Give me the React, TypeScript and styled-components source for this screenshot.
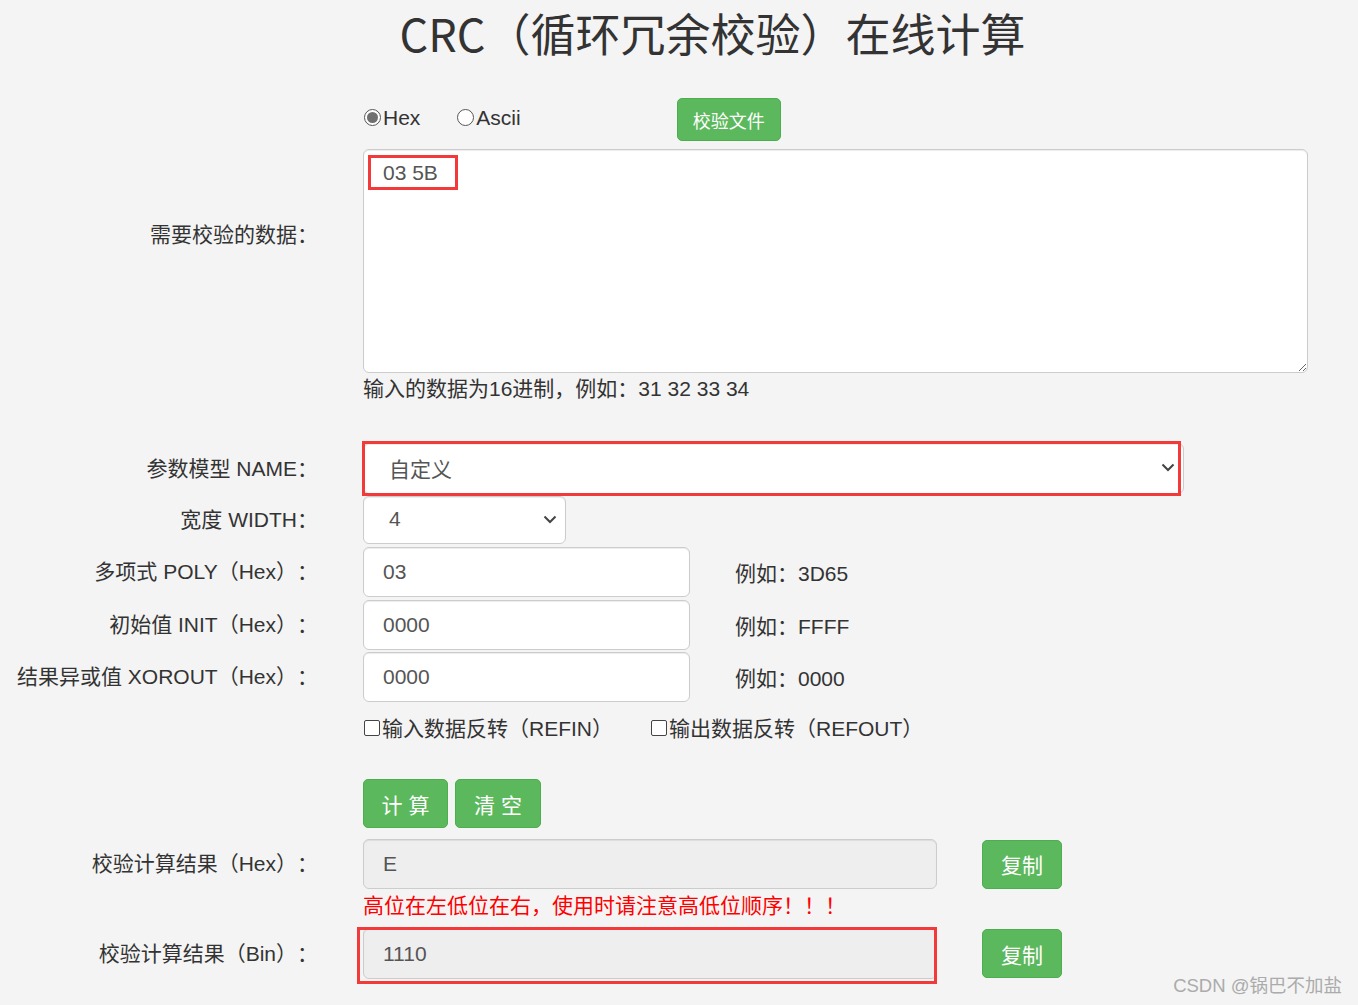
import React from "react";
import styled, { createGlobalStyle } from "styled-components";

const Global = createGlobalStyle`
  html, body { margin: 0; padding: 0; background: #f4f4f4; }
  body {
    font-family: "Liberation Sans", "Noto Sans CJK SC", sans-serif;
    color: #333;
    font-size: 21px;
  }
  * { box-sizing: border-box; }
`;

const Page = styled.div`
  position: relative;
  width: 1358px;
  height: 1005px;
`;

const Title = styled.h1`
  margin: 0;
  height: 66px;
  line-height: 66px;
  padding-left: 67px;
  text-align: center;
  font-family: "Noto Sans CJK SC", sans-serif;
  font-weight: 400;
  font-size: 45px;
  color: #333;
`;

const Row = styled.div<{ $mt: number; $top?: boolean }>`
  display: flex;
  align-items: ${(p) => (p.$top ? "flex-start" : "center")};
  margin-top: ${(p) => p.$mt}px;
`;

const Label = styled.div<{ $offset?: number }>`
  width: 318px;
  flex-shrink: 0;
  margin-right: 45px;
  text-align: right;
  white-space: nowrap;
  line-height: 22px;
  text-spacing-trim: space-all;
  margin-top: ${(p) => p.$offset ?? 0}px;
`;

const Field = styled.div`
  display: flex;
  align-items: center;
`;

const Choice = styled.label<{ $gap?: number; $lift?: number }>`
  display: inline-flex;
  align-items: center;
  line-height: 22px;
  margin-right: ${(p) => p.$gap ?? 0}px;
  margin-bottom: ${(p) => p.$lift ?? 0}px;
  white-space: nowrap;
`;

const RadioDot = styled.span<{ $on?: boolean }>`
  width: 17px;
  height: 17px;
  border-radius: 50%;
  border: 1px solid #555;
  background: #fff;
  margin: 0 2px 0 1px;
  display: inline-flex;
  align-items: center;
  justify-content: center;
  &::after {
    content: "";
    width: 11px;
    height: 11px;
    border-radius: 50%;
    background: ${(p) => (p.$on ? "#707070" : "transparent")};
  }
`;

const CheckBox = styled.span`
  width: 16px;
  height: 16px;
  border: 1px solid #444;
  border-radius: 2px;
  background: #fff;
  margin: 0 2px 0 1px;
  transform: translateY(-1px);
`;

const GreenButton = styled.button<{ $w: number; $h: number; $fs: number }>`
  width: ${(p) => p.$w}px;
  height: ${(p) => p.$h}px;
  font-family: "Liberation Sans", "Noto Sans CJK SC", sans-serif;
  font-size: ${(p) => p.$fs}px;
  color: #fff;
  background: #5cb85c;
  border: 1px solid #4cae4c;
  border-radius: 5px;
  padding: 0;
  cursor: pointer;
  white-space: pre;
`;

const FileButton = styled(GreenButton)`
  margin-left: 156px;
`;

const BoxWrap = styled.div`
  position: relative;
`;

const TextArea = styled.textarea`
  display: block;
  width: 945px;
  height: 224px;
  padding: 12px 19px;
  font-family: "Liberation Sans", "Noto Sans CJK SC", sans-serif;
  font-size: 21px;
  line-height: 22px;
  color: #555;
  background: #fff;
  border: 1px solid #ccc;
  border-radius: 6px;
  box-shadow: inset 0 1px 1px rgba(0, 0, 0, 0.075);
  outline: none;
`;

const Annot = styled.div`
  position: absolute;
  border: 3px solid #f33a3a;
  pointer-events: none;
`;

const Help = styled.div<{ $red?: boolean }>`
  margin-left: 363px;
  line-height: 22px;
  color: ${(p) => (p.$red ? "#ff0000" : "#333")};
`;

const SelectBox = styled.div<{ $w: number; $h: number }>`
  width: ${(p) => p.$w}px;
  height: ${(p) => p.$h}px;
  display: flex;
  align-items: center;
  justify-content: space-between;
  padding: 0 8px 2px 25px;
  background: #fff;
  border: 1px solid #ccc;
  border-radius: 6px;
  box-shadow: inset 0 1px 1px rgba(0, 0, 0, 0.075);
  color: #555;
`;

const Input = styled.div<{ $w: number; $h: number; $ro?: boolean }>`
  width: ${(p) => p.$w}px;
  height: ${(p) => p.$h}px;
  display: flex;
  align-items: center;
  padding: 0 19px;
  background: ${(p) => (p.$ro ? "#eeeeee" : "#fff")};
  border: 1px solid #ccc;
  border-radius: 6px;
  box-shadow: inset 0 1px 1px rgba(0, 0, 0, 0.075);
  color: #555;
`;

const Example = styled.span`
  margin-left: 45px;
  color: #333;
`;

const CopyButton = styled(GreenButton)`
  margin-left: 45px;
`;

const ButtonGroup = styled.div`
  display: flex;
  gap: 7px;
`;

const Watermark = styled.div`
  position: absolute;
  right: 16px;
  bottom: 8px;
  font-size: 18.5px;
  color: #ababab;
  white-space: nowrap;
`;

const Chevron = () => (
  <svg width="14" height="9" viewBox="0 0 14 9">
    <path d="M1.5 1.5 L7 7 L12.5 1.5" fill="none" stroke="#444" strokeWidth="2" />
  </svg>
);

export default function App() {
  return (
    <Page>
      <Global />
      <Title>CRC（循环冗余校验）在线计算</Title>

      <Row $mt={32}>
        <Label />
        <Field>
          <Choice $gap={36} $lift={4}>
            <RadioDot $on />
            Hex
          </Choice>
          <Choice $lift={4}>
            <RadioDot />
            Ascii
          </Choice>
          <FileButton $w={104} $h={43} $fs={18}>校验文件</FileButton>
        </Field>
      </Row>

      <Row $mt={8} $top>
        <Label $offset={75}>需要校验的数据：</Label>
        <BoxWrap>
          <TextArea defaultValue="03 5B" />
          <Annot style={{ left: 5, top: 6, width: 90, height: 35 }} />
        </BoxWrap>
      </Row>
      <Help style={{ marginTop: 5 }}>输入的数据为16进制，例如：31 32 33 34</Help>

      <Row $mt={43}>
        <Label>参数模型 NAME：</Label>
        <BoxWrap>
          <SelectBox $w={821} $h={51}>
            <span>自定义</span>
            <Chevron />
          </SelectBox>
          <Annot style={{ left: -1, top: -2, width: 819, height: 55 }} />
        </BoxWrap>
      </Row>

      <Row $mt={2}>
        <Label>宽度 WIDTH：</Label>
        <SelectBox $w={203} $h={48}>
          <span>4</span>
          <Chevron />
        </SelectBox>
      </Row>

      <Row $mt={3}>
        <Label>多项式 POLY（Hex）：</Label>
        <Field>
          <Input $w={327} $h={50}>03</Input>
          <Example>例如：3D65</Example>
        </Field>
      </Row>
      <Row $mt={3}>
        <Label>初始值 INIT（Hex）：</Label>
        <Field>
          <Input $w={327} $h={50}>0000</Input>
          <Example>例如：FFFF</Example>
        </Field>
      </Row>
      <Row $mt={2}>
        <Label>结果异或值 XOROUT（Hex）：</Label>
        <Field>
          <Input $w={327} $h={50}>0000</Input>
          <Example>例如：0000</Example>
        </Field>
      </Row>

      <Row $mt={16}>
        <Label />
        <Field>
          <Choice $gap={37}>
            <CheckBox />
            输入数据反转（REFIN）
          </Choice>
          <Choice>
            <CheckBox />
            输出数据反转（REFOUT）
          </Choice>
        </Field>
      </Row>

      <Row $mt={39}>
        <Label />
        <ButtonGroup>
          <GreenButton $w={85} $h={49} $fs={21}>计 算</GreenButton>
          <GreenButton $w={86} $h={49} $fs={21}>清 空</GreenButton>
        </ButtonGroup>
      </Row>

      <Row $mt={11}>
        <Label>校验计算结果（Hex）：</Label>
        <Field>
          <Input $w={574} $h={50} $ro>E</Input>
          <CopyButton $w={80} $h={49} $fs={21}>复制</CopyButton>
        </Field>
      </Row>
      <Help $red style={{ marginTop: 6 }}>高位在左低位在右，使用时请注意高低位顺序！！！</Help>

      <Row $mt={11}>
        <Label>校验计算结果（Bin）：</Label>
        <Field>
          <BoxWrap>
            <Input $w={574} $h={51} $ro>1110</Input>
            <Annot style={{ left: -6, top: -1, width: 580, height: 57 }} />
          </BoxWrap>
          <CopyButton $w={80} $h={49} $fs={21}>复制</CopyButton>
        </Field>
      </Row>

      <Watermark>CSDN @锅巴不加盐</Watermark>
    </Page>
  );
}
